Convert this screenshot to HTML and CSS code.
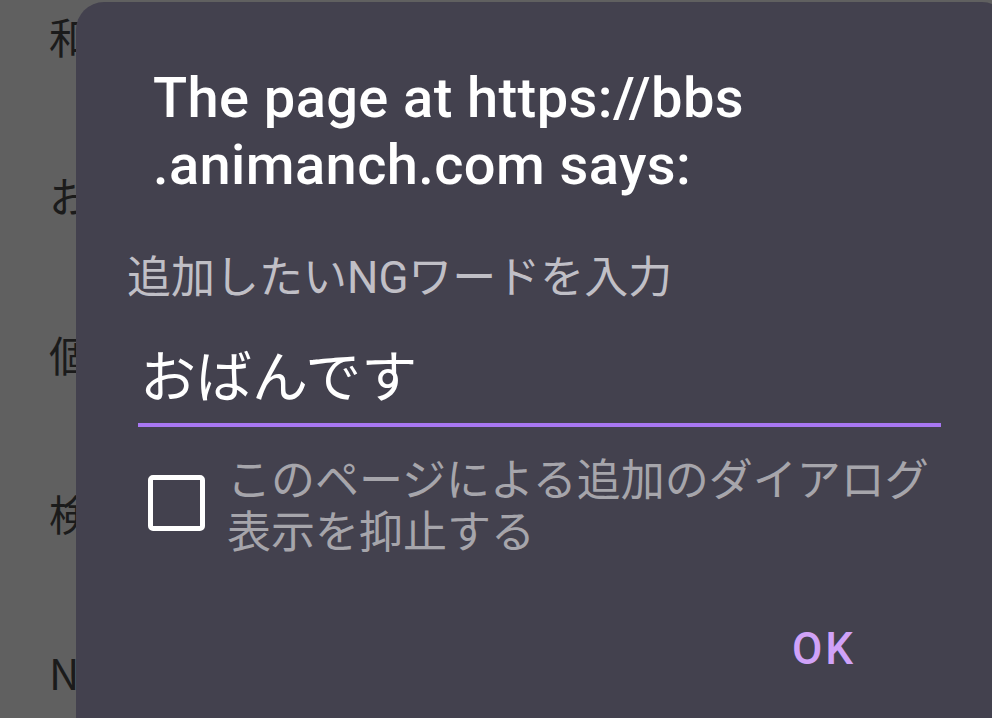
FILE: index.html
```html
<!DOCTYPE html>
<html lang="ja">
  <head>
    <meta name="viewport" content="width=device-width" />
    <title>NGワード追加</title>
    <link rel="stylesheet" href="styles.css">
  </head>
  <body>
    <ul class="settings">
      <li>和</li>
      <li>お</li>
      <li>個</li>
      <li>検</li>
      <li>N</li>
    </ul>

    <div class="dialog" role="dialog">
      <h2 class="dialog-title">The page at https://bbs<br>.animanch.com says:</h2>
      <label class="prompt" for="ngword">追加したいNGワードを入力</label>
      <div class="field">
        <input id="ngword" type="text" value="おばんです">
      </div>
      <label class="suppress">
        <span class="box"></span>
        <span class="suppress-text">このページによる追加のダイアログ表示を抑止する</span>
      </label>
      <div class="actions">
        <button class="ok">OK</button>
      </div>
    </div>
  </body>
</html>
```

FILE: styles.css
```css
html, body {
  margin: 0;
  height: 100%;
}

body {
  background: #606060;
  overflow: hidden;
  font-family: Roboto, "Noto Sans CJK JP", sans-serif;
}

/* the page behind the dialog, dimmed */
.settings {
  list-style: none;
  margin: 0;
  padding: 10px 0 0 49px;
  color: #1b1b1b;
  font-size: 42px;
  font-family: "Noto Sans CJK JP", sans-serif;
}

.settings li {
  height: 159px;
  line-height: 52px;
}

.dialog {
  position: absolute;
  left: 76px;
  top: 2px;
  width: 934px;
  height: 760px;
  box-sizing: border-box;
  padding: 63px 0 0 51px;
  background: #43414e;
  border-radius: 28px;
}

.dialog-title {
  margin: 0 0 0 26px;
  color: #ffffff;
  font-size: 56px;
  font-weight: 500;
  line-height: 67px;
  letter-spacing: 0.4px;
}

.prompt {
  display: block;
  margin-top: 53px;
  color: #c0bfc6;
  font-size: 44px;
  line-height: 53px;
}

.field {
  margin: 40px 0 0 11px;
  width: 803px;
  border-bottom: 4px solid #a877f2;
}

.field input {
  display: block;
  width: 100%;
  box-sizing: border-box;
  border: 0;
  padding: 0 0 12px 2px;
  background: transparent;
  color: #ffffff;
  font: 56px/66px Roboto, "Noto Sans CJK JP", sans-serif;
  outline: none;
}

.suppress {
  display: flex;
  align-items: flex-start;
  gap: 22px;
  margin: 28px 0 0 21px;
  width: 790px;
}

.box {
  flex: none;
  width: 57px;
  height: 56px;
  margin-top: 20px;
  box-sizing: border-box;
  border: 5px solid #ffffff;
  border-radius: 5px;
}

.suppress-text {
  color: #a6a5ab;
  font-size: 44px;
  line-height: 52px;
}

.actions {
  display: flex;
  margin-top: 60px;
  padding-left: 651px;
}

.ok {
  border: 0;
  padding: 0 14px;
  background: none;
  color: #d0a2f8;
  font: 500 44px/60px Roboto, sans-serif;
  letter-spacing: 3px;
}
```
